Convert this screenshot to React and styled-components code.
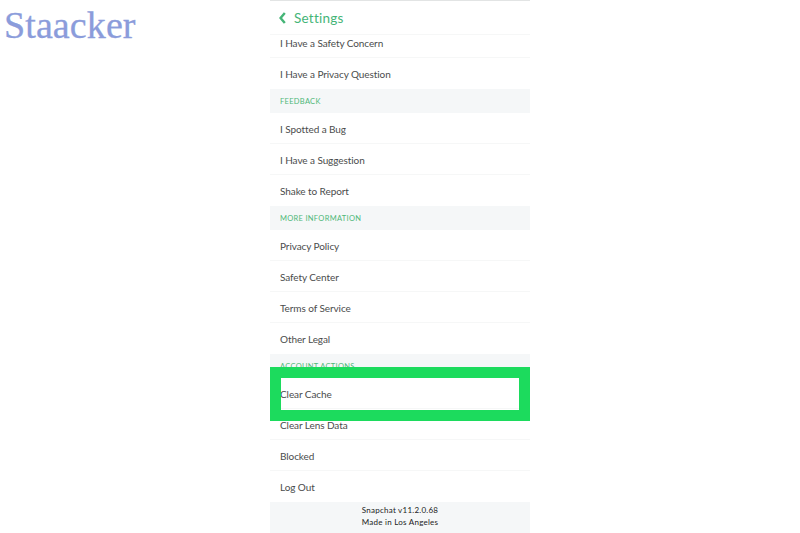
import React from "react";
import styled, { createGlobalStyle } from "styled-components";

const Global = createGlobalStyle`
  html, body { margin: 0; padding: 0; background: #fff; }
  body { font-family: "Lato", "Liberation Sans", sans-serif; }
`;

const Page = styled.div`
  display: grid;
  grid-template-columns: 270px 260px 1fr;
  width: 800px;
  height: 533px;
  overflow: hidden;
  background: #fff;
`;

const Logo = styled.div`
  padding: 4px 0 0 4px;
  font-family: "Liberation Serif", serif;
  font-size: 38px;
  line-height: 42px;
  letter-spacing: 0.1px;
  color: #8b9cdb;
  -webkit-text-stroke: 0.3px #8b9cdb;
`;

const Phone = styled.div`
  position: relative;
  display: flex;
  flex-direction: column;
  height: 533px;
  border-top: 1px solid #e2e4e4;
  box-sizing: border-box;
`;

const Header = styled.div`
  display: flex;
  align-items: center;
  gap: 8px;
  height: 34px;
  padding-left: 9px;
  flex: none;
  color: #45b577;
  font-size: 13.5px;
  letter-spacing: 0.25px;
  border-bottom: 1px solid #f6f7f7;
  box-sizing: border-box;
`;

const Row = styled.div`
  display: flex;
  align-items: center;
  height: ${(p) => p.$h || 31}px;
  flex: none;
  padding: ${(p) => (p.$cut ? "0 0 7px 10px" : "1px 0 0 10px")};
  box-sizing: border-box;
  font-size: 10px;
  font-weight: 400;
  letter-spacing: -0.08px;
  color: #4a4c4c;
  border-bottom: ${(p) => (p.$last ? "none" : "1px solid #f6f7f7")};
`;

const Section = styled.div`
  display: flex;
  align-items: center;
  height: 24px;
  flex: none;
  padding-left: 10px;
  background: #f5f7f8;
  color: #4fb878;
  font-size: 7.5px;
  letter-spacing: 0.3px;
  text-transform: uppercase;
`;

const Footer = styled.div`
  flex: 1;
  display: flex;
  flex-direction: column;
  align-items: center;
  justify-content: center;
  padding-bottom: 4px;
  background: #f5f7f8;
  color: #222;
  font-size: 8px;
  line-height: 12px;
  letter-spacing: 0.25px;
`;

const Highlight = styled.div`
  position: absolute;
  left: 0;
  top: 366px;
  width: 260px;
  height: 54px;
  box-sizing: border-box;
  border: 11px solid #1cdb5d;
`;

const groups = [
  { rows: ["I Have a Safety Concern", "I Have a Privacy Question"] },
  { title: "Feedback", rows: ["I Spotted a Bug", "I Have a Suggestion", "Shake to Report"] },
  { title: "More Information", rows: ["Privacy Policy", "Safety Center", "Terms of Service", "Other Legal"] },
  { title: "Account Actions", rows: ["Clear Cache", "Clear Lens Data", "Blocked", "Log Out"] },
];

export default function App() {
  return (
    <Page>
      <Global />
      <Logo>Staacker</Logo>
      <Phone>
        <Header>
          <svg width="7" height="12" viewBox="0 0 7 12" fill="none">
            <path d="M5.8 1 1.6 6l4.2 5" stroke="#45b577" strokeWidth="2.4" />
          </svg>
          Settings
        </Header>
        {groups.map((g, gi) => (
          <React.Fragment key={gi}>
            {g.title && <Section>{g.title}</Section>}
            {g.rows.map((r, ri) => (
              <Row
                key={r}
                $h={gi === 0 && ri === 0 ? 23 : undefined}
                $cut={gi === 0 && ri === 0}
                $last={ri === g.rows.length - 1}
              >
                {r}
              </Row>
            ))}
          </React.Fragment>
        ))}
        <Footer>
          <span>Snapchat v11.2.0.68</span>
          <span>Made in Los Angeles</span>
        </Footer>
        <Highlight />
      </Phone>
      <div />
    </Page>
  );
}
